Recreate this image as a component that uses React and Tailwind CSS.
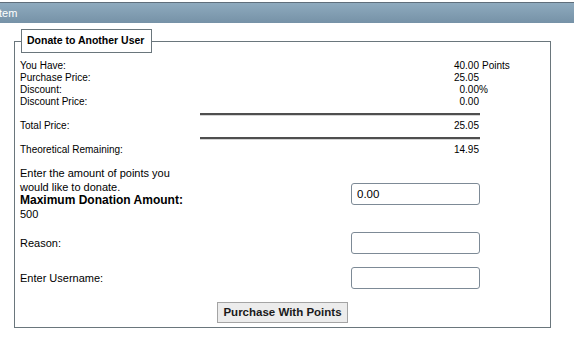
import React from 'react';

const rows = [
  { label: 'You Have:', value: '40.00', suffix: 'Points', gap: true },
  { label: 'Purchase Price:', value: '25.05' },
  { label: 'Discount:', value: '0.00', suffix: '%' },
  { label: 'Discount Price:', value: '0.00' },
];

const Row = ({ label, value, suffix, gap }) => (
  <div className="flex h-[12px] items-center leading-[12px]">
    <div className="w-[180px] shrink-0">{label}</div>
    <div className="w-[252px] shrink-0" />
    <div className="flex whitespace-nowrap">
      <span className="w-[27px] shrink-0 text-right">{value}</span>
      {suffix && <span className={gap ? 'ml-[3px]' : ''}>{suffix}</span>}
    </div>
  </div>
);

const Rule = () => (
  <div className="ml-[180px] w-[280px] h-[2px] bg-[#4f4f4f] border-b border-[#d4d4d4] box-content" />
);

const Field = ({ value }) => (
  <input
    defaultValue={value}
    className="w-[129px] h-[22px] rounded-[3px] border border-[#7d8a96] bg-white px-[5px] text-[11.5px] text-black outline-none"
    style={{ fontFamily: '"Liberation Sans", Arial, sans-serif' }}
  />
);

export default function App() {
  return (
    <div
      className="w-[574px] h-[343px] bg-white text-black pt-[2px]"
      style={{ fontFamily: '"Liberation Sans", Arial, sans-serif' }}
    >
      {/* window header bar, cut off on the left */}
      <div className="h-[21px] border-t border-[#5f6e7b] bg-gradient-to-b from-[#8eaabe] to-[#7692a7] flex items-center text-white text-[11px]">
        <span className="-ml-[1px]">tem</span>
      </div>

      <fieldset className="ml-[14px] mt-[6px] w-[537px] border border-[#6a767c] pl-[5px] pr-0 pb-[4px]">
        <legend className="ml-[1px] h-[24px] w-[131px] border border-[#6a767c] bg-white flex items-center pl-[5px] text-[10.5px] font-bold">
          Donate to Another User
        </legend>

        <div className="pt-[7px] text-[10px]">
          {rows.map((r) => (
            <Row key={r.label} {...r} />
          ))}
          <div className="mt-[5px]">
            <Rule />
          </div>
          <div className="mt-[4px]">
            <Row label="Total Price:" value="25.05" />
          </div>
          <div className="mt-[5px]">
            <Rule />
          </div>
          <div className="mt-[4px]">
            <Row label="Theoretical Remaining:" value="14.95" />
          </div>
        </div>

        <div className="mt-[11px] grid grid-cols-[331px_auto] items-center text-[11px]">
          <div className="leading-[13.5px]">
            <div>Enter the amount of points you</div>
            <div>would like to donate.</div>
            <div className="font-bold text-[12px]">Maximum Donation Amount:</div>
            <div>500</div>
          </div>
          <Field value="0.00" />

          <div className="mt-[11px]">Reason:</div>
          <div className="mt-[11px]">
            <Field value="" />
          </div>

          <div className="mt-[13px]">Enter Username:</div>
          <div className="mt-[13px]">
            <Field value="" />
          </div>
        </div>

        <div className="mt-[13px] flex justify-center pr-[5px]">
          <button className="w-[131px] h-[21px] border border-[#a4a4a4] bg-[#ececec] text-[11.5px] font-bold text-[#1a1a1a] leading-none">
            Purchase With Points
          </button>
        </div>
      </fieldset>
    </div>
  );
}
